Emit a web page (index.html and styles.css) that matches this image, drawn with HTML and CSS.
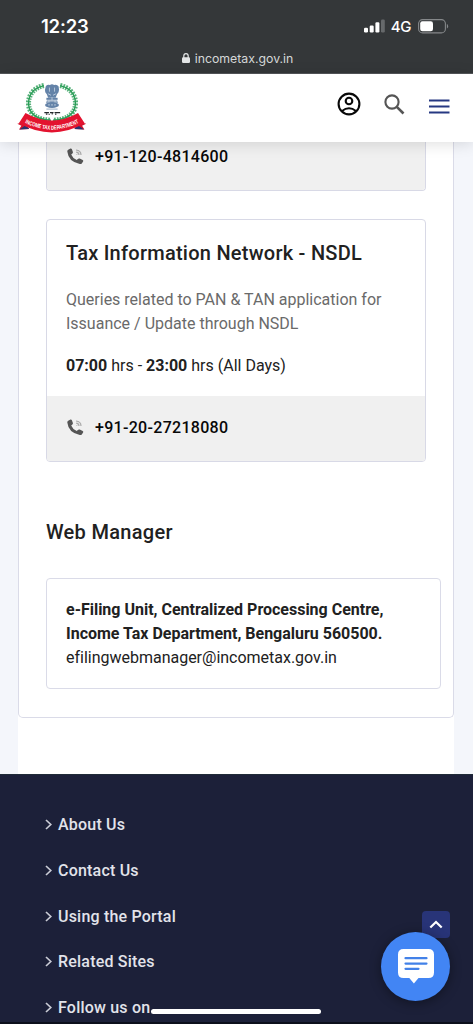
FILE: index.html
```html
<!DOCTYPE html>
<html lang="en">
<head>
<meta charset="utf-8">
<meta name="viewport" content="width=device-width, initial-scale=1">
<title>Income Tax Department - Contact Us</title>
<link rel="stylesheet" href="styles.css">
</head>
<body>
<div class="browser-bar">
  <div class="status">
    <span class="clock">12:23</span>
    <div class="signals">
      <svg class="bars" width="21" height="14" viewBox="0 0 21 14"><g fill="#fff"><rect x="0" y="8.7" width="4" height="4.8" rx="1.2"/><rect x="5.7" y="6.6" width="4" height="6.9" rx="1.2"/><rect x="11.4" y="3.3" width="4" height="10.2" rx="1.2"/></g><rect x="17" y="0.5" width="3.8" height="13" rx="1.2" fill="#66696b"/></svg>
      <span class="network">4G</span>
      <svg class="battery" width="31" height="15" viewBox="0 0 31 15"><rect x="0.6" y="0.6" width="26.8" height="13.3" rx="4" fill="none" stroke="#85888a" stroke-width="1.1"/><rect x="2.2" y="2.2" width="12.8" height="10.1" rx="2.2" fill="#fff"/><path d="M28.9 5v4.5q1.2-.5 1.2-2.2T28.900 5z" fill="#85888a"/></svg>
    </div>
  </div>
  <div class="address">
    <svg width="8" height="10" viewBox="0 0 8 10"><rect x="0" y="4.200" width="8" height="5.800" rx="1.200" fill="#e3e5e6"/><path d="M1.800 5V3a2.200 2.300 0 0 1 4.400 0v2" fill="none" stroke="#e3e5e6" stroke-width="1.200"/></svg>
    <span>incometax.gov.in</span>
  </div>
</div>

<header class="site-header">
  <svg class="logo" width="72" height="51" viewBox="0 0 70 50">
    <g fill="none" stroke="#2a9d57">
      <path d="M27 2.500C10 6 8 25 18 32q5 4 16 4.500" stroke-width="1.300"/>
      <path d="M43 2.500C60 6 62 25 52 32q-5 4-16 4.500" stroke-width="1.300"/>
      <path d="M27 2.500C10 6 8 25 18 32q5 4 16 4.500" stroke-width="5" stroke-dasharray="1.700 1.100" opacity=".8"/>
      <path d="M43 2.500C60 6 62 25 52 32q-5 4-16 4.500" stroke-width="5" stroke-dasharray="1.700 1.100" opacity=".8"/>
    </g>
    <g fill="#6483a8">
      <path d="M29 3q2-2 4-1 2-1.500 4 0 3-1 4.500 1.500l.4 3-.5 2.500-1.500 2-1.300 3.500h-7.400l-1.300-3.500-1.500-2-.3-2.500z"/>
      <rect x="29.500" y="14.500" width="11" height="2"/>
      <path d="M30 17h10l1 2.500h-12z" opacity=".7"/>
      <ellipse cx="35" cy="21.600" rx="6.800" ry="2.900"/>
      <rect x="29.500" y="25" width="11" height="1.200" opacity=".55"/>
    </g>
    <path d="M32.500 4.500v4m5-4v4M31 10.500l3 1.500m5-1.500l-3 1.500M35 14v3M32 17v2m6-2v2M31 21.500h2m1 0h2m1 0h2" stroke="#d7e3ee" stroke-width=".7"/>
    <path d="M27.500 29h4.500m1 0h3.500m1 0h5.500M29 30.500h1.500m1.200.3h1m2-.6h1m2.500.4h1" stroke="#24282b" stroke-width="1.300"/>
    <path d="M8 38L1 40l4 2-2.300 3.500 9.800-.3z" fill="#d5122d"/>
    <path d="M61.500 38l7 2-4 2 2.300 3.500-9.800-.3z" fill="#d5122d"/>
    <path d="M3 45.500l9.500-.5-2.500-4zM66.500 45.500l-9.500-.5 2.500-4z" fill="#28346f"/>
    <path d="M9 29.500Q35 44 60.500 29.500L67 39.500Q35 57.500 2.500 39.500z" fill="#e3132f"/>
    <path id="ribbon" d="M6.800 38.200Q35 53.200 63 38.200" fill="none"/>
    <text class="ribbon-text"><textPath href="#ribbon" startOffset="50%" text-anchor="middle" textLength="55" lengthAdjust="spacingAndGlyphs">INCOME TAX DEPARTMENT</textPath></text>
  </svg>
  <nav class="tools">
    <svg class="user" width="24" height="24" viewBox="0 0 24 24" fill="none" stroke="#090909" stroke-width="2.100"><circle cx="12" cy="12" r="10.400"/><circle cx="12" cy="9" r="3.300"/><path d="M5 19q7-5.500 14 0"/></svg>
    <svg class="search" width="21" height="21" viewBox="0 0 21 21" fill="none" stroke="#555" ><circle cx="8" cy="8" r="6.600" stroke-width="2.100"/><path d="M12.800 12.800l6.700 6.700" stroke-width="2.600"/></svg>
    <svg class="menu" width="21" height="15" viewBox="0 0 21 15"><path d="M0 1.500h20.500M0 7.500h20.500M0 13.500h20.500" stroke="#263882" stroke-width="2"/></svg>
  </nav>
</header>

<main class="page">
  <div class="content">
    <section class="panel">
      <article class="card card-clipped">
        <div class="phone">
          <svg width="17" height="17" viewBox="0 0 17 17"><path d="M1.200 1.700L3.500.5q1-.2 1.400.7l1 2.700q.3.900-.5 1.500L4.200 6.600q1.400 3.700 5.500 5.500l1.500-1.300q.7-.5 1.500-.2l3 1.500q1 .6.400 1.500l-1.300 1.800q-.8.800-2 .6Q1.500 14 .3 3.600q-.1-1.200.9-1.900z" fill="#555"/><path d="M9 2q5 .5 5 5M9.200 4.200q2.700.3 2.800 2.800M9.500 6.500h.8" fill="none" stroke="#aaa" stroke-width="1.200"/></svg>
          <span>+91-120-4814600</span>
        </div>
      </article>
      <article class="card">
        <div class="card-body">
          <h2 class="card-title">Tax Information Network - NSDL</h2>
          <p class="description">Queries related to PAN &amp; TAN application for<br>Issuance / Update through NSDL</p>
          <p class="hours"><b>07:00</b> hrs - <b>23:00</b> hrs (All Days)</p>
        </div>
        <div class="phone">
          <svg width="17" height="17" viewBox="0 0 17 17"><path d="M1.200 1.700L3.500.5q1-.2 1.400.7l1 2.700q.3.900-.5 1.500L4.200 6.600q1.400 3.700 5.500 5.500l1.500-1.300q.7-.5 1.500-.2l3 1.500q1 .6.400 1.500l-1.300 1.800q-.8.800-2 .6Q1.500 14 .3 3.600q-.1-1.200.9-1.900z" fill="#555"/><path d="M9 2q5 .5 5 5M9.200 4.200q2.700.3 2.800 2.800M9.500 6.500h.8" fill="none" stroke="#aaa" stroke-width="1.200"/></svg>
          <span>+91-20-27218080</span>
        </div>
      </article>
      <h2 class="section-title">Web Manager</h2>
      <address class="manager"><b>e-Filing Unit, Centralized Processing Centre,</b><br><b>Income Tax Department, Bengaluru 560500.</b><br>efilingwebmanager@incometax.gov.in</address>
    </section>
  </div>
</main>

<footer class="site-footer">
  <ul class="links">
    <li><svg width="7" height="11" viewBox="0 0 7 11"><path d="M1 1l4.800 4.500L1 10"/></svg><span>About Us</span></li>
    <li><svg width="7" height="11" viewBox="0 0 7 11"><path d="M1 1l4.800 4.500L1 10"/></svg><span>Contact Us</span></li>
    <li><svg width="7" height="11" viewBox="0 0 7 11"><path d="M1 1l4.800 4.500L1 10"/></svg><span>Using the Portal</span></li>
    <li><svg width="7" height="11" viewBox="0 0 7 11"><path d="M1 1l4.800 4.500L1 10"/></svg><span>Related Sites</span></li>
    <li><svg width="7" height="11" viewBox="0 0 7 11"><path d="M1 1l4.800 4.500L1 10"/></svg><span>Follow us on</span></li>
  </ul>
</footer>

<div class="to-top"><svg width="14" height="9" viewBox="0 0 14 9"><path d="M1.300 7.500L7 2l5.700 5.500" fill="none" stroke="#fff" stroke-width="2.200"/></svg></div>
<div class="chat"><svg width="36" height="35" viewBox="0 0 36 35"><path d="M5.500 0h25Q36 0 36 5.500v18q0 5.500-5.500 5.500H20.500l-4.600 5.500L11.300 29H5.500Q0 29 0 23.500v-18Q0 0 5.500 0z" fill="#fff"/><path d="M7.500 9.200h21M7.500 14.600h21M7.500 19.800h13" stroke="#4281e8" stroke-width="2.200" stroke-linecap="round"/></svg></div>
<div class="home-indicator"></div>
</body>
</html>
```

FILE: styles.css
```css
* { box-sizing: border-box; }
body {
  margin: 0;
  width: 473px;
  height: 1024px;
  overflow: hidden;
  position: relative;
  display: flex;
  flex-direction: column;
  font-family: Roboto, "Liberation Sans", sans-serif;
  color: #212121;
  background: #fff;
}
svg { display: block; flex: none; }
h2, p, ul { margin: 0; padding: 0; }

.browser-bar { height: 74px; flex: none; background: #343739; border-bottom: 1px solid #54575a; color: #fff; font-family: Inter, sans-serif; }
.status { height: 46px; padding: 6px 24px 0 41px; display: flex; align-items: center; justify-content: space-between; }
.clock { font-size: 18.500px; font-weight: 600; letter-spacing: -.2px; }
.signals { display: flex; align-items: center; }
.network { margin: 0 7px 0 6px; font-size: 15px; font-weight: 500; letter-spacing: -.4px; }
.address { display: flex; justify-content: center; align-items: center; gap: 5px; height: 24px; padding-left: 2px; color: #d5d7d8; font-size: 12.300px; letter-spacing: 0; }

.site-header { height: 68px; flex: none; display: flex; justify-content: space-between; align-items: flex-start; padding: 9px 23px 0 16px; background: #fff; position: relative; box-shadow: 0 2px 14px rgba(0, 0, 0, .13); }
.ribbon-text { font-family: "Liberation Sans", sans-serif; font-weight: 700; font-size: 5.800px; fill: #fff; }
.tools { display: flex; align-items: center; height: 42px; }
.user { margin-right: 23px; }
.search { margin-right: 24px; }
.menu { margin-top: 5px; }

.page { height: 632px; flex: none; padding: 0 19px 0 18px; background: #f4f6fb; }
.content { height: 632px; background: #fff; }
.panel { height: 576px; border: 1px solid #dadbe8; border-top: 0; border-radius: 0 0 5px 5px; padding: 0 12px 0 27px; }
.card { width: 380px; border: 1px solid #d8d9e6; border-radius: 4px; margin-bottom: 28px; overflow: hidden; }
.card-clipped { height: 49px; border-top: 0; border-radius: 0 0 4px 4px; }
.card-clipped .phone { height: 48px; padding-bottom: 20px; }
.card-body { height: 176px; padding: 19px 19px 0; }
.card-title { font-size: 20px; line-height: 28px; font-weight: 500; letter-spacing: .25px; white-space: nowrap; }
.description { margin-top: 21px; font-size: 16px; line-height: 24px; color: #6a6a6a; white-space: nowrap; }
.hours { margin-top: 18px; font-size: 16px; line-height: 24px; white-space: nowrap; }
.hours b { font-weight: 700; }
.phone { height: 65px; display: flex; align-items: center; gap: 11px; padding: 0 20px 3px; background: #f0f0f0; font-size: 16px; font-weight: 500; color: #080808; letter-spacing: .3px; }
.section-title { margin-top: 56px; font-size: 20px; line-height: 28px; font-weight: 500; letter-spacing: .3px; }
.manager { margin-top: 32px; height: 111px; width: 395px; border: 1px solid #dadbe8; border-radius: 4px; padding: 19px 19px 0; font-size: 16px; line-height: 24px; font-style: normal; letter-spacing: -.01px; white-space: nowrap; }

.site-footer { flex: 1; background: #1c2039; border-top: 1px solid #202b38; border-bottom: 2px solid #0c0f1c; overflow: hidden; }
.links { list-style: none; padding: 27px 0 0 45px; }
.links li { height: 45.700px; display: flex; align-items: center; gap: 6px; color: #e2e3ea; font-size: 16px; font-weight: 500; letter-spacing: .2px; }
.links path { fill: none; stroke: #c9cbd5; stroke-width: 1.700; }

.to-top { position: absolute; left: 422px; top: 911px; width: 28px; height: 27px; border-radius: 4px; background: #283478; display: flex; align-items: center; justify-content: center; }
.chat { position: absolute; left: 381px; top: 932px; width: 69px; height: 69px; border-radius: 50%; background: #4285f4; box-shadow: 0 2px 12px rgba(0, 0, 0, .4); display: flex; align-items: center; justify-content: center; }
.home-indicator { position: absolute; left: 151px; top: 1009px; width: 170px; height: 5px; border-radius: 3px; background: #fff; }
```
